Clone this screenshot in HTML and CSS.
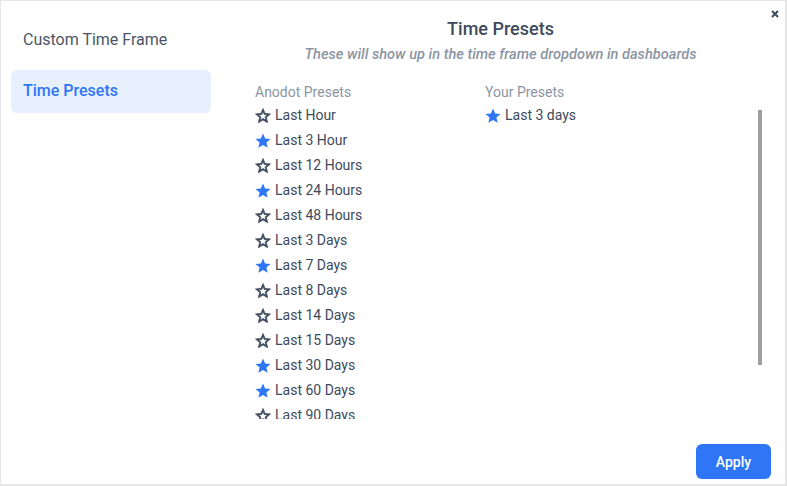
FILE: index.html
```html
<!DOCTYPE html>
<html lang="en">

<head>
    <meta charset="UTF-8">
    <meta name="viewport" content="width=device-width, initial-scale=1.0">
    <title>Time Presets</title>
    <link rel="stylesheet" href="styles.css">
</head>

<body>
    <div class="dialog">
        <button class="close-button" aria-label="Close">
            <svg width="8" height="8" viewBox="0 0 8 8"><path d="M1 1L7 7M7 1L1 7" stroke="#3d4a5c" stroke-width="2"/></svg>
        </button>

        <div class="dialog-body">
            <div class="sidebar">
                <div class="side-item">Custom Time Frame</div>
                <div class="side-item active">Time Presets</div>
            </div>

            <div class="main">
                <h2 class="title">Time Presets</h2>
                <div class="subtitle">These will show up in the time frame dropdown in dashboards</div>

                <div class="columns">
                    <div class="column">
                        <div class="column-label">Anodot Presets</div>
                        <div id="anodot-list" class="preset-list"></div>
                    </div>
                    <div class="column">
                        <div class="column-label">Your Presets</div>
                        <div id="your-list" class="preset-list"></div>
                    </div>
                    <div class="scroll-thumb"></div>
                </div>
            </div>
        </div>

        <div class="footer">
            <button class="apply-button">Apply</button>
        </div>
    </div>

    <script>
        const anodotPresets = [
            { name: 'Last Hour', fav: false },
            { name: 'Last 3 Hour', fav: true },
            { name: 'Last 12 Hours', fav: false },
            { name: 'Last 24 Hours', fav: true },
            { name: 'Last 48 Hours', fav: false },
            { name: 'Last 3 Days', fav: false },
            { name: 'Last 7 Days', fav: true },
            { name: 'Last 8 Days', fav: false },
            { name: 'Last 14 Days', fav: false },
            { name: 'Last 15 Days', fav: false },
            { name: 'Last 30 Days', fav: true },
            { name: 'Last 60 Days', fav: true },
            { name: 'Last 90 Days', fav: false },
            { name: 'Last 180 Days', fav: false },
            { name: 'Last Year', fav: false }
        ];
        const yourPresets = [
            { name: 'Last 3 days', fav: true }
        ];

        // звезды
        const starEmpty = '<svg class="star" viewBox="0 0 24 24"><path fill="#3d4a5c" stroke="#3d4a5c" stroke-width="1" stroke-linejoin="round" d="M22 9.24l-7.19-.62L12 2 9.19 8.63 2 9.24l5.46 4.73L5.82 21 12 17.27 18.18 21l-1.63-7.03L22 9.24zM12 15.4l-3.76 2.27 1-4.28-3.32-2.88 4.38-.38L12 6.1l1.71 4.04 4.38.38-3.32 2.88 1 4.28L12 15.4z"/></svg>';
        const starFull = '<svg class="star" viewBox="0 0 24 24"><path fill="#2f76f6" d="M12 17.27L18.18 21l-1.64-7.03L22 9.24l-7.19-.61L12 2 9.19 8.63 2 9.24l5.46 4.73L5.82 21z"/></svg>';

        function renderList(id, items) {
            const list = document.getElementById(id);
            items.forEach(item => {
                const row = document.createElement('div');
                row.classList.add('preset');
                row.innerHTML = (item.fav ? starFull : starEmpty) + `<span>${item.name}</span>`;
                list.appendChild(row);
            });
        }

        renderList('anodot-list', anodotPresets);
        renderList('your-list', yourPresets);
    </script>
</body>

</html>
```

FILE: styles.css
```css
body {
    margin: 0;
    font-family: Roboto, "Liberation Sans", sans-serif;
    color: #3d4a5c;
    background: #fff;
}

.dialog {
    position: relative;
    width: 787px;
    height: 486px;
    box-sizing: border-box;
    border-top: 1px solid #e6e6e6;
    border-left: 1px solid #e6e6e6;
    border-right: 2px solid #e6e6e6;
    border-bottom: 2px solid #e6e6e6;
    display: flex;
    flex-direction: column;
}

.close-button {
    position: absolute;
    top: 9px;
    right: 6px;
    padding: 0;
    border: none;
    background: none;
    cursor: pointer;
    line-height: 0;
}

.dialog-body {
    flex: 1;
    display: flex;
    min-height: 0;
}

/* левое меню */
.sidebar {
    width: 221px;
    box-sizing: border-box;
    padding: 17px 0 0 10px;
    display: flex;
    flex-direction: column;
    gap: 9px;
}

.side-item {
    width: 200px;
    height: 43px;
    box-sizing: border-box;
    padding: 0 12px;
    display: flex;
    align-items: center;
    font-size: 16px;
    color: #4a5666;
    border-radius: 6px;
}

.side-item.active {
    background-color: #e8f0fd;
    color: #2f76f6;
    font-weight: 500;
    padding-bottom: 2px;
}

.main {
    flex: 1;
    padding: 16px 6px 0 0;
    display: flex;
    flex-direction: column;
}

.title {
    margin: 0;
    text-align: center;
    font-size: 18px;
    font-weight: 500;
    line-height: 24px;
    color: #3d4a5c;
}

.subtitle {
    margin-top: 3px;
    text-align: center;
    font-size: 14.6px;
    font-style: italic;
    font-weight: 500;
    line-height: 20px;
    color: #8b95a3;
}

.columns {
    position: relative;
    margin-top: 18px;
    padding-left: 33px;
    height: 337px;
    overflow: hidden;
    display: flex;
}

.column {
    width: 230px;
}

.column-label {
    font-size: 14px;
    line-height: 20px;
    color: #8b95a3;
}

.preset {
    height: 25px;
    display: flex;
    align-items: center;
    gap: 3px;
    font-size: 14px;
    color: #3d4a5c;
}

.star {
    width: 18px;
    height: 18px;
    margin-left: -1px;
    margin-top: 2px;
}

.scroll-thumb {
    position: absolute;
    top: 28px;
    right: 17px;
    width: 4px;
    height: 255px;
    background-color: #9e9e9e;
}

.footer {
    display: flex;
    justify-content: flex-end;
    padding: 0 14px 5px 0;
}

.apply-button {
    width: 75px;
    height: 35px;
    border: none;
    border-radius: 6px;
    background-color: #2f76f6;
    color: white;
    font-family: Roboto, "Liberation Sans", sans-serif;
    font-size: 14px;
    font-weight: 500;
    cursor: pointer;
}
```
